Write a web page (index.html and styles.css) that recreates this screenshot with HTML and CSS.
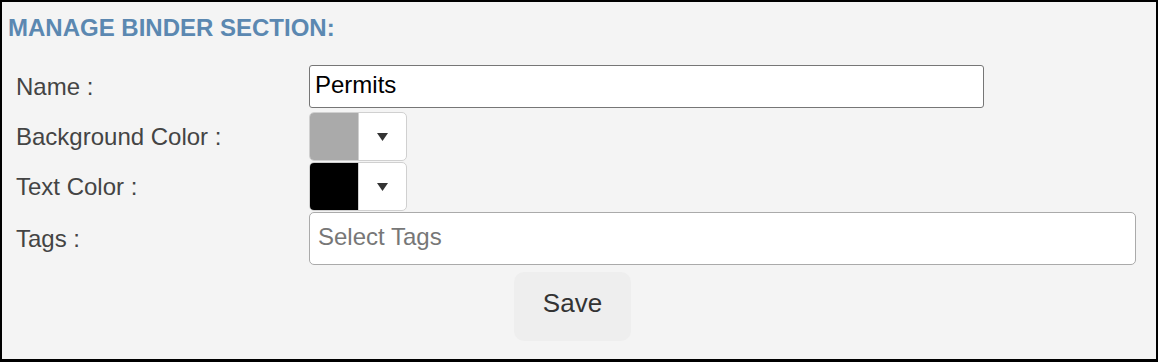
FILE: index.html
```html
<!DOCTYPE html>
<html>
<head>
<meta charset="utf-8">
<link rel="stylesheet" href="styles.css">
</head>
<body>
<div class="panel">
  <h2 class="title">MANAGE BINDER SECTION:</h2>
  <div class="form">
    <div class="row row-name">
      <label class="label">Name :</label>
      <input class="text-input" type="text" value="Permits">
    </div>
    <div class="row row-color">
      <label class="label">Background Color :</label>
      <div class="picker">
        <span class="swatch swatch-grey"></span>
        <span class="drop"><svg class="caret" width="11" height="8" viewBox="0 0 11 8"><polygon points="0,0 11,0 5.5,8" fill="#333"/></svg></span>
      </div>
    </div>
    <div class="row row-color row-color2">
      <label class="label">Text Color :</label>
      <div class="picker">
        <span class="swatch swatch-black"></span>
        <span class="drop"><svg class="caret" width="11" height="8" viewBox="0 0 11 8"><polygon points="0,0 11,0 5.5,8" fill="#333"/></svg></span>
      </div>
    </div>
    <div class="row row-tags">
      <label class="label">Tags :</label>
      <input class="tags-input" type="text" placeholder="Select Tags">
    </div>
    <div class="actions">
      <button class="save" type="button">Save</button>
    </div>
  </div>
</div>
</body>
</html>
```
FILE: styles.css
```css
html, body {
  margin: 0;
  padding: 0;
}
body {
  font-family: "Liberation Sans", Arial, sans-serif;
}
.panel {
  box-sizing: border-box;
  width: 1158px;
  height: 362px;
  border: 2px solid #000;
  border-bottom-width: 3px;
  background: #f4f4f4;
  padding: 0 0 0 6px;
}
.title {
  margin: 0;
  padding-top: 12px;
  font-size: 24px;
  line-height: 28px;
  font-weight: bold;
  color: #5b88b1;
}
.form {
  margin-top: 23px;
  padding-left: 8px;
  display: flex;
  flex-direction: column;
}
.row {
  display: grid;
  grid-template-columns: 293px 1fr;
  align-items: center;
}
.label {
  font-size: 24px;
  color: #444;
  line-height: 28px;
}
.row-name {
  margin-bottom: 4px;
}
.text-input {
  box-sizing: border-box;
  width: 675px;
  height: 43px;
  border: 1px solid #767676;
  border-radius: 3px;
  background: #fff;
  padding: 0 5px 4px 5px;
  font-family: "Liberation Sans", Arial, sans-serif;
  font-size: 24px;
  color: #000;
  outline: none;
}
.row-color {
  margin-bottom: 1px;
}
.picker {
  box-sizing: border-box;
  width: 98px;
  height: 49px;
  border: 1px solid #d0d0d0;
  border-radius: 5px;
  overflow: hidden;
  display: flex;
  background: #fff;
}
.swatch {
  width: 48px;
  height: 100%;
}
.swatch-grey {
  background: #aaaaaa;
}
.swatch-black {
  background: #000;
}
.drop {
  flex: 1;
  border-left: 1px solid #d0d0d0;
  display: flex;
  align-items: center;
  justify-content: center;
  padding-top: 1px;
}
.caret {
  display: block;
}
.tags-input {
  box-sizing: border-box;
  width: 827px;
  height: 53px;
  border: 1px solid #aaa;
  border-radius: 5px;
  background: #fff;
  padding: 0 8px 3px 8px;
  font-family: "Liberation Sans", Arial, sans-serif;
  font-size: 24px;
  color: #000;
  outline: none;
}
.tags-input::placeholder {
  color: #777;
}
.actions {
  display: flex;
  padding-left: 498px;
  margin-top: 7px;
}
.save {
  box-sizing: border-box;
  width: 117px;
  height: 69px;
  border: none;
  border-radius: 10px;
  background: #eeeeee;
  font-family: "Liberation Sans", Arial, sans-serif;
  font-size: 26px;
  color: #333;
  padding: 0 0 7px 0;
}
```
